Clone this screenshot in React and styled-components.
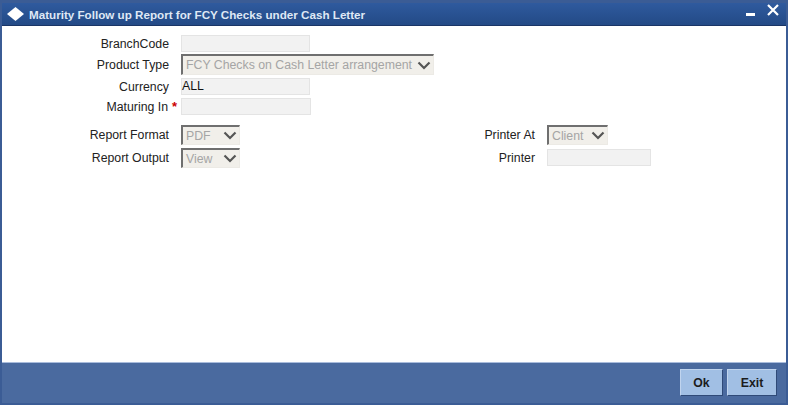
import React from 'react';
import styled, { createGlobalStyle } from 'styled-components';

const Global = createGlobalStyle`
  html, body { margin: 0; padding: 0; background: #fff; }
  #root { width: 788px; height: 405px; }
`;

const Window = styled.div`
  width: 788px;
  height: 405px;
  box-sizing: border-box;
  display: flex;
  flex-direction: column;
  background: #fff;
  border: solid #3b5c95;
  border-width: 3px 2px 2px 2px;
  font-family: "Liberation Sans", Arial, sans-serif;
  font-size: 12.3px;
  color: #222;
`;

const TitleBar = styled.div`
  height: 23px;
  flex: none;
  box-sizing: border-box;
  display: flex;
  align-items: center;
  padding: 0 7px 0 5px;
  background: linear-gradient(#2f5a9e, #234a86);
  border-bottom: 1px solid #1a3566;
  color: #dfe8f5;
`;

const TitleText = styled.div`
  font-weight: bold;
  font-size: 11.65px;
  margin-left: 5px;
  flex: 1;
`;

const Controls = styled.div`
  display: flex;
  align-items: flex-start;
  gap: 11px;
  align-self: flex-start;
`;

const Body = styled.div`
  flex: 1;
  padding-top: 9px;
  display: flex;
  flex-direction: column;
`;

const Rows = styled.div`
  display: flex;
  flex-direction: column;
`;

const Row = styled.div`
  display: flex;
  align-items: center;
  height: ${p => p.$h}px;
  margin-top: ${p => p.$mt || 0}px;
`;

const Label = styled.div`
  width: ${p => p.$w}px;
  box-sizing: border-box;
  text-align: right;
  flex: none;
  white-space: nowrap;
`;

const Star = styled.span`
  flex: none;
  width: 6px;
  margin-left: 4px;
  color: #c00;
  font-weight: bold;
  font-size: 13px;
`;

const Input = styled.div`
  width: ${p => p.$w}px;
  height: 17px;
  box-sizing: border-box;
  margin-left: ${p => p.$ml}px;
  margin-bottom: ${p => p.$mb || 0}px;
  background: #f2f2f2;
  border: 1px solid #e4e4e4;
  line-height: 15px;
  color: #111;
`;

const Select = styled.div`
  width: ${p => p.$w}px;
  height: ${p => p.$h}px;
  box-sizing: border-box;
  margin-left: ${p => p.$ml}px;
  background: #f1efea;
  border-top: 2px solid #6f6f6f;
  border-left: 2px solid #6f6f6f;
  border-right: 1px solid #eceae5;
  border-bottom: 1px solid #eceae5;
  display: flex;
  align-items: center;
  justify-content: space-between;
  padding: 0 2px 0 3px;
  color: #a5a5a5;
  white-space: nowrap;
`;

const Footer = styled.div`
  height: 41px;
  flex: none;
  box-sizing: border-box;
  background: #4a6a9f;
  border-top: 1px solid #a9bcdc;
  display: flex;
  align-items: flex-start;
  justify-content: flex-end;
  gap: 4px;
  padding: 6px 9px 0 0;
`;

const Button = styled.button`
  width: ${p => p.$w}px;
  height: 27px;
  box-sizing: border-box;
  padding: 0;
  font-family: inherit;
  font-size: 12.3px;
  font-weight: bold;
  color: #1c1c1c;
  background: #a1bfe4;
  border: 1px solid;
  border-color: #c0d4ee #2f4a78 #2f4a78 #c0d4ee;
`;

const Chevron = () => (
  <svg width="14" height="9" viewBox="0 0 14 9">
    <path d="M1.5 1.5 L7 7 L12.5 1.5" fill="none" stroke="#555" strokeWidth="2.2" />
  </svg>
);

const Diamond = () => (
  <svg width="17" height="14" viewBox="0 0 17 14">
    <path d="M8.5 0 L17 7 L8.5 14 L0 7 Z" fill="#fff" />
  </svg>
);

const Minimize = () => (
  <svg width="10" height="12" viewBox="0 0 10 12" style={{ marginTop: 4 }}>
    <rect x="0" y="6" width="9" height="3" fill="#fff" />
  </svg>
);

const Close = () => (
  <svg width="12" height="12" viewBox="0 0 12 12" style={{ marginTop: 1 }}>
    <path d="M1 1 L11 11 M11 1 L1 11" stroke="#fff" strokeWidth="2.2" />
  </svg>
);

export default function App() {
  return (
    <Window>
      <Global />
      <TitleBar>
        <Diamond />
        <TitleText>Maturity Follow up Report for FCY Checks under Cash Letter</TitleText>
        <Controls><Minimize /><Close /></Controls>
      </TitleBar>
      <Body>
        <Rows>
          <Row $h={17}>
            <Label $w={167}>BranchCode</Label>
            <Input $w={129} $ml={12} />
          </Row>
          <Row $h={21} $mt={2}>
            <Label $w={167}>Product Type</Label>
            <Select $w={253} $h={21} $ml={12}>FCY Checks on Cash Letter arrangement<Chevron /></Select>
          </Row>
          <Row $h={17} $mt={3}>
            <Label $w={167}>Currency</Label>
            <Input $w={129} $ml={12}>ALL</Input>
          </Row>
          <Row $h={17} $mt={3}>
            <Label $w={166}>Maturing In</Label>
            <Star>*</Star>
            <Input $w={130} $ml={3} />
          </Row>
        </Rows>
        <Rows>
          <Row $h={20} $mt={10}>
            <Label $w={167}>Report Format</Label>
            <Select $w={59} $h={20} $ml={12}>PDF<Chevron /></Select>
            <Label $w={295}>Printer At</Label>
            <Select $w={61} $h={20} $ml={12}>Client<Chevron /></Select>
          </Row>
          <Row $h={20} $mt={3}>
            <Label $w={167}>Report Output</Label>
            <Select $w={59} $h={20} $ml={12}>View<Chevron /></Select>
            <Label $w={295}>Printer</Label>
            <Input $w={104} $ml={12} $mb={1} />
          </Row>
        </Rows>
      </Body>
      <Footer>
        <Button $w={43}>Ok</Button>
        <Button $w={50}>Exit</Button>
      </Footer>
    </Window>
  );
}
